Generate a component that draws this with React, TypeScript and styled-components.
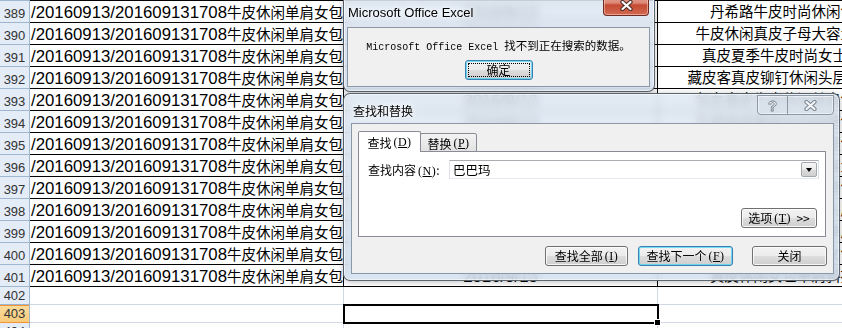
import React from 'react';
import styled, { createGlobalStyle } from 'styled-components';

const GlobalStyle = createGlobalStyle`
  html, body {
    margin: 0;
    padding: 0;
    background: #ffffff;
    overflow: hidden;
  }
  body {
    font-family: "Liberation Sans", "Noto Sans CJK SC", sans-serif;
  }
`;

const Screen = styled.div`
  position: relative;
  width: 842px;
  height: 328px;
  overflow: hidden;
  background: #fff;
`;

/* ---------- spreadsheet ---------- */

const Sheet = styled.div`
  display: grid;
  grid-template-columns: 30px 314px 314px 200px;
  width: 858px;
`;

type Line = { $data?: boolean; $first?: boolean; $h: number };

const lineColor = (p: Line) => (p.$data ? '#000' : '#d0d7e5');

const RowHead = styled.div<{ $active?: boolean; $first?: boolean; $h: number }>`
  box-sizing: border-box;
  height: ${p => p.$h + (p.$first ? 1 : 0)}px;
  display: flex;
  align-items: flex-end;
  justify-content: center;
  padding-bottom: 1px;
  border-right: 1px solid #9eb6ce;
  border-bottom: 1px solid ${p => (p.$active ? '#f29436' : '#9eb6ce')};
  border-top: ${p => (p.$first ? '1px solid #9eb6ce' : 'none')};
  box-shadow: ${p => (p.$active ? 'inset 0 1px 0 #f29436' : 'none')};
  background: ${p => (p.$active ? 'linear-gradient(#fbdd9f, #f7cb7a)' : '#e4ecf7')};
  font-family: "Liberation Sans", sans-serif;
  font-size: 13px;
  line-height: 15px;
  color: #333;
`;

const Cell = styled.div<Line>`
  box-sizing: border-box;
  height: ${p => p.$h + (p.$first ? 1 : 0)}px;
  border-right: 1px solid ${lineColor};
  border-bottom: 1px solid ${lineColor};
  border-top: ${p => (p.$first ? '1px solid #000' : 'none')};
  padding-top: 2px;
  overflow: hidden;
  white-space: nowrap;
  font-family: "Liberation Sans", "Noto Sans CJK SC", sans-serif;
  font-size: 16.8px;
  line-height: 19px;
  color: #000;
`;

const NameCell = styled(Cell)`
  padding-left: 1px;
`;

const DateCell = styled(Cell)<{ $selected?: boolean }>`
  text-align: center;
  ${p =>
    p.$selected &&
    `
    position: relative;
    z-index: 1;
    overflow: visible;
    outline: 2px solid #000;
    outline-offset: -1px;
    &::after {
      content: '';
      position: absolute;
      right: -4px;
      bottom: -4px;
      width: 5px;
      height: 5px;
      background: #000;
      border: 1px solid #fff;
    }
  `}
`;

const TitleCell = styled(Cell)`
  text-align: right;
  padding-right: 2px;
  font-size: 14.5px;
`;

const Han = styled.span`
  font-size: 14.5px;
`;

/* ---------- window chrome ---------- */

const GlassWindow = styled.div<{ $x: number; $y: number; $w: number; $h: number }>`
  position: absolute;
  left: ${p => p.$x}px;
  top: ${p => p.$y}px;
  width: ${p => p.$w}px;
  height: ${p => p.$h}px;
  box-sizing: border-box;
  z-index: 5;
  display: flex;
  flex-direction: column;
  border: 1px solid rgba(40, 48, 58, 0.7);
  border-radius: 7px;
  background: linear-gradient(180deg, rgba(220, 230, 242, 0.8), rgba(208, 222, 238, 0.8));
  backdrop-filter: blur(4px);
  box-shadow: inset 0 0 0 1px rgba(255, 255, 255, 0.6), 0 1px 6px rgba(0, 0, 0, 0.25);
`;

const TitleBar = styled.div<{ $h: number; $top: number; $left: number }>`
  box-sizing: border-box;
  height: ${p => p.$h}px;
  flex: none;
  display: flex;
  align-items: center;
  padding-top: ${p => p.$top}px;
  padding-left: ${p => p.$left}px;
`;

const TitleText = styled.span`
  font-family: "Liberation Sans", "Noto Sans CJK SC", sans-serif;
  font-size: ${p => (p.lang === 'zh' ? 12 : 13)}px;
  color: #000;
  text-shadow: 0 0 4px #fff, 0 0 6px #fff;
`;

const ClientArea = styled.div<{ $margin: string }>`
  flex: 1;
  margin: ${p => p.$margin};
  box-sizing: border-box;
  background: #f0f0f0;
  border: 1px solid #8a97a7;
  display: flex;
  flex-direction: column;
`;

const RedClose = styled.div`
  position: absolute;
  top: 0;
  right: 5px;
  width: 46px;
  height: 23px;
  box-sizing: border-box;
  display: flex;
  align-items: flex-end;
  justify-content: center;
  padding-bottom: 4px;
  border: 1px solid #6e2b22;
  border-top: none;
  border-radius: 0 0 4px 4px;
  background: linear-gradient(#eab0a3 0%, #dc8877 45%, #c54a33 55%, #d26a52 100%);
  box-shadow: inset 0 0 0 1px rgba(255, 210, 200, 0.55);
`;

const CaptionGroup = styled.div`
  position: absolute;
  top: 1px;
  right: 5px;
  display: flex;
  height: 20px;
  box-sizing: border-box;
  border: 1px solid rgba(120, 132, 146, 0.8);
  border-radius: 0 0 4px 4px;
  box-shadow: inset 0 0 0 1px rgba(255, 255, 255, 0.55);
`;

const CaptionButton = styled.div<{ $w: number; $divider?: boolean }>`
  width: ${p => p.$w}px;
  display: flex;
  align-items: center;
  justify-content: center;
  border-right: ${p => (p.$divider ? '1px solid rgba(120, 132, 146, 0.8)' : 'none')};
`;

const HelpGlyph = styled.span`
  font-family: "Liberation Sans", sans-serif;
  font-weight: 700;
  font-size: 15px;
  line-height: 15px;
  color: #f4f6f8;
  -webkit-text-stroke: 0.8px #7a8590;
`;

const CrossIcon = ({ dark, light }: { dark: string; light: string }) => (
  <svg width="15" height="11" viewBox="0 0 15 11">
    <path d="M3.5 2 L11.5 9 M11.5 2 L3.5 9" stroke={dark} strokeWidth="4.2" strokeLinecap="round" />
    <path d="M3.5 2 L11.5 9 M11.5 2 L3.5 9" stroke={light} strokeWidth="2.2" strokeLinecap="round" />
  </svg>
);

/* ---------- controls ---------- */

const WinButton = styled.div<{ $w: number; $focus?: boolean; $ml?: number }>`
  position: relative;
  box-sizing: border-box;
  width: ${p => p.$w}px;
  height: 20px;
  flex: none;
  margin-left: ${p => p.$ml ?? 0}px;
  display: flex;
  align-items: center;
  justify-content: center;
  border: 1px solid ${p => (p.$focus ? '#3c7fb1' : '#707070')};
  border-radius: 3px;
  background: linear-gradient(#f2f2f2 0%, #ebebeb 50%, #dddddd 51%, #cfcfcf 100%);
  box-shadow: inset 0 0 0 1px ${p => (p.$focus ? 'rgba(72, 214, 247, 0.75)' : 'rgba(255, 255, 255, 0.8)')};
  font-family: "Noto Sans CJK SC", sans-serif;
  font-size: 12px;
  line-height: 14px;
  color: #000;
`;

const FocusRing = styled.span`
  position: absolute;
  inset: 2px;
  border: 1px dotted #000;
`;

const Key = styled.span`
  font-family: "Liberation Serif", serif;
  font-size: 12px;
  margin-left: 2px;
  letter-spacing: 0.5px;
`;

const MessageBody = styled.div`
  display: flex;
  flex-direction: column;
  align-items: center;
  padding-top: 10px;
`;

const MessageText = styled.div`
  font-family: "Noto Sans CJK SC", sans-serif;
  font-size: 11.5px;
  line-height: 14px;
  height: 14px;
  margin-bottom: 8px;
  color: #000;
  white-space: nowrap;
`;

const Mono = styled.span`
  font-family: "Liberation Mono", monospace;
  font-size: 10px;
`;

const FindBody = styled.div`
  flex: 1;
  display: flex;
  flex-direction: column;
  padding: 7px 7px 0 6px;
`;

const TabStrip = styled.div`
  display: flex;
  align-items: flex-end;
  height: 21px;
  position: relative;
  z-index: 1;
  margin-bottom: -1px;
`;

const Tab = styled.div<{ $active?: boolean; $w: number }>`
  box-sizing: border-box;
  width: ${p => p.$w}px;
  height: ${p => (p.$active ? 21 : 19)}px;
  margin-left: ${p => (p.$active ? 0 : -1)}px;
  display: flex;
  align-items: center;
  justify-content: center;
  padding-top: ${p => (p.$active ? 1 : 2)}px;
  border: 1px solid #898c95;
  border-bottom: ${p => (p.$active ? 'none' : '1px solid #898c95')};
  border-radius: 2px 2px 0 0;
  background: ${p => (p.$active ? '#fff' : 'linear-gradient(#f3f3f3, #e2e2e2)')};
  font-family: "Noto Sans CJK SC", sans-serif;
  font-size: 12px;
  color: #000;
`;

const TabPage = styled.div`
  box-sizing: border-box;
  height: 86px;
  display: flex;
  flex-direction: column;
  padding: 8px 6px 8px 9px;
  border: 1px solid #898c95;
  background: #fff;
`;

const FieldRow = styled.div`
  display: flex;
  align-items: center;
  height: 19px;
`;

const FieldLabel = styled.div`
  width: 81px;
  flex: none;
  font-family: "Noto Sans CJK SC", sans-serif;
  font-size: 12px;
  color: #000;
`;

const ComboBox = styled.div`
  flex: 1;
  box-sizing: border-box;
  height: 19px;
  display: flex;
  align-items: center;
  border: 1px solid;
  border-color: #abadb3 #dbdfe6 #e3e9ef #e2e3ea;
  background: #fff;
`;

const ComboText = styled.div`
  flex: 1;
  padding-left: 3px;
  font-family: "Noto Sans CJK SC", sans-serif;
  font-size: 12.5px;
  color: #000;
`;

const ComboArrow = styled.div`
  box-sizing: border-box;
  width: 16px;
  height: 15px;
  margin-right: 1px;
  display: flex;
  align-items: center;
  justify-content: center;
  border: 1px solid #a4a8ad;
  border-radius: 2px;
  background: linear-gradient(#f6f6f6 0%, #e9e9e9 50%, #dcdcdc 51%, #d0d0d0 100%);

  &::after {
    content: '';
    border-left: 3.5px solid transparent;
    border-right: 3.5px solid transparent;
    border-top: 4px solid #000;
    margin-top: 1px;
  }
`;

const OptionsRow = styled.div`
  margin-top: auto;
  display: flex;
  justify-content: flex-end;
  padding-right: 2px;
`;

const ButtonRow = styled.div`
  display: flex;
  justify-content: flex-end;
  margin-top: 9px;
  margin-right: -1px;
`;

/* ---------- data ---------- */

const dataRows = Array.from({ length: 13 }, (_, i) => 389 + i);

const titles = [
  '丹希路牛皮时尚休闲包',
  '牛皮休闲真皮子母大容量',
  '真皮夏季牛皮时尚女士2',
  '藏皮客真皮铆钉休闲头层1',
  '包女真皮牛皮休闲单肩包',
  '牛皮休闲单肩女包斜挎包',
  '真皮牛皮时尚女士手提包',
  '休闲单肩女包牛皮大容量',
  '时尚女士真皮手提斜挎包',
  '牛皮休闲单肩女包头层',
  '真皮女包牛皮休闲单肩',
  '牛皮时尚休闲单肩女包',
  '真皮休闲女包单肩斜挎',
];

export default function App() {
  return (
    <>
      <GlobalStyle />
      <Screen>
        <Sheet>
          {dataRows.map((n, i) => (
            <React.Fragment key={n}>
              <RowHead $h={22} $first={i === 0}>
                {n}
              </RowHead>
              <NameCell $data $h={22} $first={i === 0}>
                /20160913/201609131708<Han>牛皮休闲单肩女包</Han>,<Han>真皮</Han>
              </NameCell>
              <DateCell $data $h={22} $first={i === 0}>
                2016/9/13
              </DateCell>
              <TitleCell $data $h={22} $first={i === 0}>
                {titles[i]}
              </TitleCell>
            </React.Fragment>
          ))}
          {[402, 403, 404].map(n => (
            <React.Fragment key={n}>
              <RowHead $h={18} $active={n === 403}>
                {n}
              </RowHead>
              <NameCell $h={18} />
              <DateCell $h={18} $selected={n === 403} />
              <TitleCell $h={18} />
            </React.Fragment>
          ))}
        </Sheet>

        <GlassWindow $x={343} $y={-8} $w={312} $h={100}>
          <TitleBar $h={34} $top={4} $left={4}>
            <TitleText>Microsoft Office Excel</TitleText>
          </TitleBar>
          <RedClose>
            <CrossIcon dark="#4a2a26" light="#ffffff" />
          </RedClose>
          <ClientArea $margin="0 4px 4px 3px">
            <MessageBody>
              <MessageText>
                <Mono>Microsoft Office Excel </Mono>找不到正在搜索的数据。
              </MessageText>
              <WinButton $w={68} $focus>
                确定
                <FocusRing />
              </WinButton>
            </MessageBody>
          </ClientArea>
        </GlassWindow>

        <GlassWindow $x={343} $y={93} $w={497} $h={188}>
          <TitleBar $h={29} $top={3} $left={9}>
            <TitleText lang="zh">查找和替换</TitleText>
          </TitleBar>
          <CaptionGroup>
            <CaptionButton $w={29} $divider>
              <HelpGlyph>?</HelpGlyph>
            </CaptionButton>
            <CaptionButton $w={45}>
              <CrossIcon dark="#7a8590" light="#f4f6f8" />
            </CaptionButton>
          </CaptionGroup>
          <ClientArea $margin="0 5px 6px 7px">
            <FindBody>
              <TabStrip>
                <Tab $active $w={63}>
                  查找<Key>(<u>D</u>)</Key>
                </Tab>
                <Tab $w={57}>
                  替换<Key>(<u>P</u>)</Key>
                </Tab>
              </TabStrip>
              <TabPage>
                <FieldRow>
                  <FieldLabel>
                    查找内容<Key>(<u>N</u>)</Key>:
                  </FieldLabel>
                  <ComboBox>
                    <ComboText>巴巴玛</ComboText>
                    <ComboArrow />
                  </ComboBox>
                </FieldRow>
                <OptionsRow>
                  <WinButton $w={76}>
                    选项<Key>(<u>T</u>)</Key>&nbsp;&nbsp;&gt;&gt;
                  </WinButton>
                </OptionsRow>
              </TabPage>
              <ButtonRow>
                <WinButton $w={83}>
                  查找全部<Key>(<u>I</u>)</Key>
                </WinButton>
                <WinButton $w={95} $ml={10} $focus>
                  查找下一个<Key>(<u>F</u>)</Key>
                </WinButton>
                <WinButton $w={75} $ml={19}>
                  关闭
                </WinButton>
              </ButtonRow>
            </FindBody>
          </ClientArea>
        </GlassWindow>
      </Screen>
    </>
  );
}
